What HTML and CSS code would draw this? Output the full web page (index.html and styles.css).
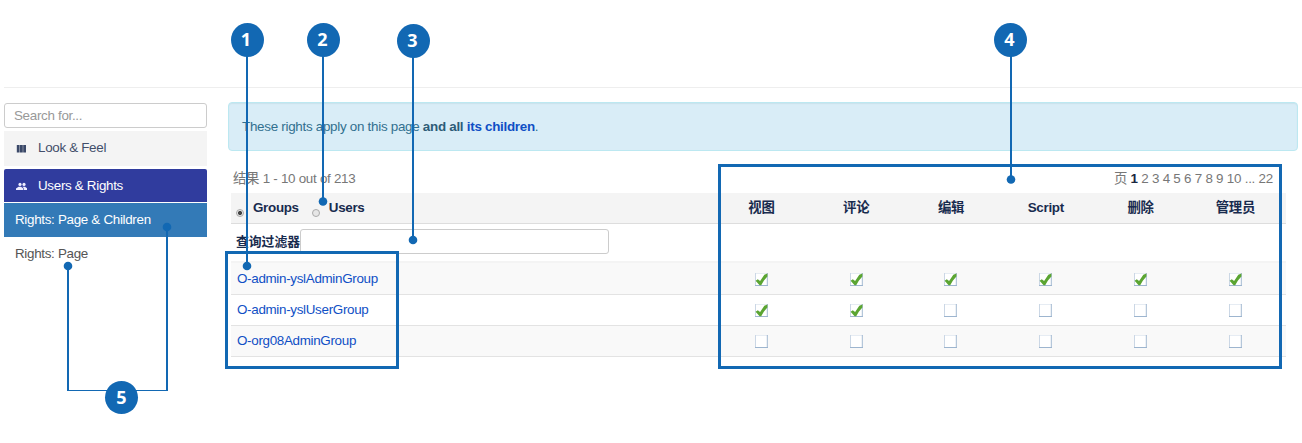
FILE: index.html
```
<!DOCTYPE html>
<html lang="zh">
<head>
<meta charset="utf-8">
<title>Rights</title>
<link rel="stylesheet" href="styles.css">
</head>
<body>
<svg class="defs" width="0" height="0" aria-hidden="true">
  <symbol id="box" viewBox="0 0 13 13">
    <rect width="13" height="13" fill="#fff"/>
    <path d="M0 .5H13" stroke="#e6ecf3"/>
    <path d="M.5 0V13" stroke="#cbd7e5"/>
    <path d="M12.3 0V13" stroke="#a3b9d1"/>
    <path d="M0 12.5H13" stroke="#9db5cf"/>
  </symbol>
  <symbol id="checked" viewBox="0 0 13 13">
    <use href="#box"/>
    <path d="M.6 7.700 2.800 6.300 5.100 8.100 9.300 1.800 12.400 .6V3.400L8.800 7.800 6.200 12.300H4.600Z" fill="#5ba532"/>
  </symbol>
</svg>
<div class="page">
  <hr class="rule">
  <div class="layout">
    <nav class="sidebar">
      <input class="search" type="text" placeholder="Search for...">
      <div class="section">
        <svg class="section-icon" width="11" height="9" viewBox="0 0 11 9"><path d="M.8 1h2.800v7.500H.8zM4 1h2.800v7.500H4zM7.200 1h2.800v7.500H7.200z" fill="#3a4868"/></svg>
        <span>Look &amp; Feel</span>
      </div>
      <div class="section open">
        <svg class="section-icon" width="11" height="9" viewBox="0 0 11 9"><g fill="#eef"><circle cx="4" cy="2.400" r="1.600"/><circle cx="8" cy="2.400" r="1.600"/><path d="M0 8V6.500L2.600 4.800H5L7 6.300V8zM7.600 8V6L6.400 4.800H9L11 6.300V8z"/></g></svg>
        <span>Users &amp; Rights</span>
      </div>
      <div class="entry active">Rights: Page &amp; Children</div>
      <div class="entry">Rights: Page</div>
    </nav>
    <main class="main">
      <div class="alert">These rights apply on this page <b>and all <a>its children</a></b>.</div>
      <div class="paging">
        <span>结果 1 - 10 out of 213</span>
        <span class="pages">页 <b>1</b> 2 3 4 5 6 7 8 9 10 ... 22</span>
      </div>
      <div class="table">
        <div class="row head">
          <div class="scope">
            <i class="radio on"></i><span class="groups">Groups</span><i class="radio"></i><span>Users</span>
          </div>
          <span>视图</span><span>评论</span><span>编辑</span><span>Script</span><span>删除</span><span>管理员</span>
        </div>
        <div class="filter"><label for="filter">查询过滤器</label><input id="filter" class="filter-input" type="text"></div>
        <div class="row data odd first">
          <a>O-admin-yslAdminGroup</a>
          <svg class="tick"><use href="#checked"/></svg><svg class="tick"><use href="#checked"/></svg><svg class="tick"><use href="#checked"/></svg><svg class="tick"><use href="#checked"/></svg><svg class="tick"><use href="#checked"/></svg><svg class="tick"><use href="#checked"/></svg>
        </div>
        <div class="row data">
          <a>O-admin-yslUserGroup</a>
          <svg class="tick"><use href="#checked"/></svg><svg class="tick"><use href="#checked"/></svg><svg class="tick"><use href="#box"/></svg><svg class="tick"><use href="#box"/></svg><svg class="tick"><use href="#box"/></svg><svg class="tick"><use href="#box"/></svg>
        </div>
        <div class="row data odd">
          <a>O-org08AdminGroup</a>
          <svg class="tick"><use href="#box"/></svg><svg class="tick"><use href="#box"/></svg><svg class="tick"><use href="#box"/></svg><svg class="tick"><use href="#box"/></svg><svg class="tick"><use href="#box"/></svg><svg class="tick"><use href="#box"/></svg>
        </div>
      </div>
    </main>
  </div>
  <svg class="callouts" width="1302" height="443" viewBox="0 0 1302 443">
    <g class="lines">
      <path d="M247 40V266M323 40V202M413 41V240M1011 40V179M68 266V391M167 227V391"/>
      <path d="M67 390.500H168" stroke-width="1"/>
      <rect x="226.500" y="252.500" width="171" height="115" stroke-width="3"/>
      <rect x="719.500" y="165.500" width="561" height="202" stroke-width="3"/>
    </g>
    <g class="dots">
      <circle cx="247" cy="266" r="4.300"/><circle cx="323" cy="201.500" r="4.300"/><circle cx="413" cy="240" r="4.300"/>
      <circle cx="1011" cy="179.500" r="4.300"/><circle cx="68" cy="266" r="4.300"/><circle cx="167" cy="227" r="4.300"/>
      <ellipse cx="247.500" cy="40" rx="16.500" ry="17"/><ellipse cx="323.500" cy="40" rx="16.500" ry="17"/><ellipse cx="413.500" cy="41" rx="16.500" ry="17"/>
      <ellipse cx="1010.500" cy="40" rx="16.500" ry="17"/><circle cx="121.500" cy="397.500" r="16.500"/>
    </g>
    <g class="numbers">
      <text x="246" y="46">1</text><text x="322.500" y="46">2</text><text x="412.500" y="47">3</text><text x="1009.500" y="46">4</text><text x="121.500" y="404">5</text>
    </g>
  </svg>
</div>
</body>
</html>
```
FILE: styles.css
```
* { box-sizing: border-box; }
body {
  margin: 0;
  background: #fff;
  color: #4e5560;
  font: 13.4px/20px "Liberation Sans", "Noto Sans CJK SC", sans-serif;
  letter-spacing: -0.31px;
}
input { font: inherit; letter-spacing: inherit; }
.defs { display: block; }
.page { position: relative; width: 1302px; height: 443px; overflow: hidden; padding: 87px 0 0 4px; }
.rule { margin: 0 0 14px; border: 0; border-top: 1px solid #eee; }
.layout { display: flex; gap: 21px; }
.sidebar { width: 203px; padding-top: 1px; display: flex; flex-direction: column; }
.search {
  height: 25px; margin-bottom: 3px; padding: 0 9px; width: 100%;
  border: 1px solid #ccc; border-radius: 3px;
}
.search::placeholder { color: #999; opacity: 1; }
.section {
  height: 35px; margin-bottom: 3px; padding: 0 12px 2px;
  display: flex; align-items: center; gap: 11px;
  background: #f4f4f4; color: #424f6b;
}
.section.open { height: 33px; margin-bottom: 1px; padding-bottom: 0; background: #303c9e; color: #fff; border-radius: 2px 2px 0 0; }
.section-icon { flex: none; margin-top: 2px; }
.entry { height: 34px; padding: 0 11px; line-height: 34px; color: #555; }
.entry.active { background: #337ab7; color: #fff; }
.main { width: 1070px; }
.alert {
  height: 49px; padding: 0 13px; line-height: 47px;
  background: #d9edf7; border: 1px solid #bce8f1; border-radius: 4px; color: #31708f;
  box-shadow: inset 0 1px 1px #c9e2ec;
  letter-spacing: -0.28px;
}
.alert b { color: #2d5c78; }
a, .alert a { color: #0f4fc5; }
.paging { height: 42px; display: flex; justify-content: space-between; padding: 18px 25px 0 5px; color: #777; letter-spacing: -0.28px; }
.pages { letter-spacing: -0.24px; }
.pages b { color: #1a2740; }
.table { width: 1055px; margin-left: 3px; }
.row { display: grid; grid-template-columns: 483px repeat(6, 94.8px); align-items: center; justify-items: center; }
.row > :first-child { justify-self: start; padding-left: 6px; }
.head { height: 31px; background: #f4f4f4; border-bottom: 1px solid #ddd; color: #182b4e; font-weight: bold; }
.head > span { padding-bottom: 1px; }
.row > .scope { display: flex; align-items: center; padding-left: 5px; }
.radio {
  width: 8px; height: 8px; margin-top: 9px;
  border: 1px solid #aaa; border-radius: 50%;
  background: #e6e6e6;
}
.radio.on { background: radial-gradient(circle, #444 0 1.8px, #e6e6e6 2.3px); }
.scope span { margin-left: 9px; }
.scope .groups { margin-right: 13px; }
.filter { height: 37px; display: flex; align-items: center; padding: 0 0 2px 5px; color: #182b4e; font-weight: bold; }
.filter label { width: 64px; font-size: 12.8px; letter-spacing: 0; }
.filter-input { width: 309px; height: 25px; border: 1px solid #ccc; border-radius: 3px; padding: 0 8px; }
.data { height: 31px; border-bottom: 1px solid #e3e3e3; }
.data.odd { background: #f9f9f9; }
.data.first { height: 34px; border-top: 2px solid #f4f4f4; }
.tick { width: 13px; height: 13px; margin-top: 1px; }
.first .tick { margin-top: 2px; }
.callouts { position: absolute; left: 0; top: 0; }
.lines { fill: none; stroke: #1268b3; stroke-width: 2; }
.dots { fill: #1268b3; }
.numbers { fill: #fff; font: bold 18px "Open Sans", sans-serif; text-anchor: middle; letter-spacing: 0; }
```
